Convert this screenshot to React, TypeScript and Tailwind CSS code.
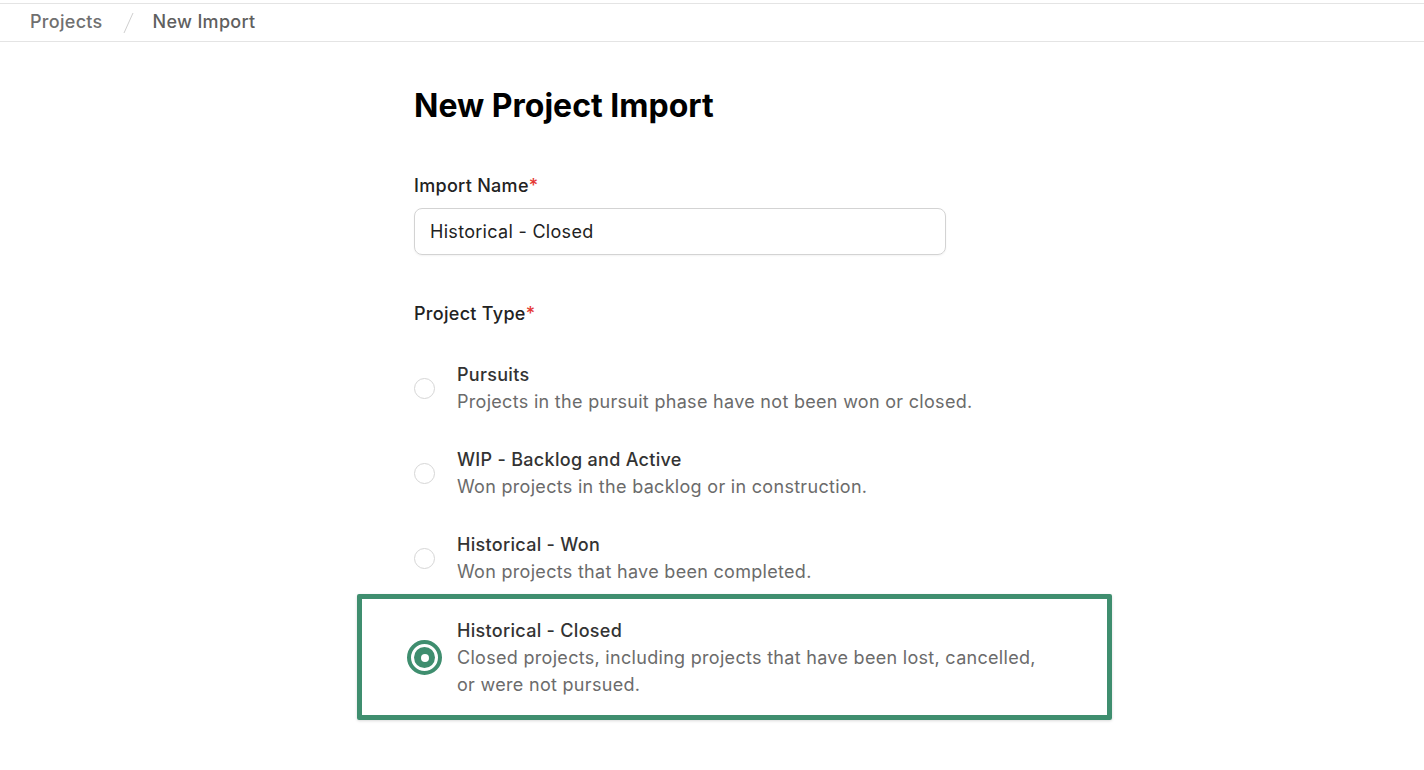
import React, { useState } from 'react'

type Option = { id: string; title: string; desc: string }

const options: Option[] = [
  { id: 'pursuits', title: 'Pursuits', desc: 'Projects in the pursuit phase have not been won or closed.' },
  { id: 'wip', title: 'WIP - Backlog and Active', desc: 'Won projects in the backlog or in construction.' },
  { id: 'won', title: 'Historical - Won', desc: 'Won projects that have been completed.' },
  {
    id: 'closed',
    title: 'Historical - Closed',
    desc: 'Closed projects, including projects that have been lost, cancelled, or were not pursued.',
  },
]

function Radio({ checked }: { checked: boolean }) {
  if (checked) {
    return (
      <span className="shrink-0 w-[21px] h-[21px] rounded-full bg-[#3f8e6f] flex items-center justify-center outline-[4px] outline-solid outline-offset-[3px] outline-[#3f8e6f]">
        <span className="w-[8px] h-[8px] rounded-full bg-white" />
      </span>
    )
  }
  return <span className="shrink-0 w-[21px] h-[21px] rounded-full border border-[#d6d6d6] bg-white" />
}

export default function App() {
  const [name, setName] = useState('Historical - Closed')
  const [selected, setSelected] = useState('closed')

  return (
    <div className="min-h-screen bg-white font-['Inter','Liberation_Sans',sans-serif] text-[18px] tracking-[0.3px]">
      {/* breadcrumb */}
      <header className="mt-[3px] h-[39px] border-y border-[#e4e4e4] flex items-center pl-[30px] pb-[2px] gap-[18px]">
        <span className="font-medium text-[#707070]">Projects</span>
        <svg width="14" height="24" viewBox="0 0 14 24" className="mt-[2px]">
          <line x1="12" y1="2" x2="3" y2="22" stroke="#cfcfcf" strokeWidth="1" />
        </svg>
        <span className="font-medium text-[#5f5f5f]">New Import</span>
      </header>

      <main className="w-[596px] mx-auto">
        <h1 className="mt-[44px] text-[32px] leading-[40px] font-bold text-black tracking-normal">
          New Project Import
        </h1>

        <label className="block mt-[46px] font-medium text-[#222] leading-[27px]">
          Import Name<span className="text-[#e53935]">*</span>
        </label>
        <input
          value={name}
          onChange={(e) => setName(e.target.value)}
          className="mt-[9px] w-[532px] h-[47px] rounded-[8px] border border-[#d3d3d3] px-[15px] text-[18px] tracking-[0.3px] text-[#222] outline-none shadow-[0_1px_2px_rgba(0,0,0,0.05)]"
        />

        <div className="mt-[45px] font-medium text-[#222] leading-[27px]">
          Project Type<span className="text-[#e53935]">*</span>
        </div>

        <div className="mt-[34px] flex flex-col gap-[31px]">
          {options.map((o) => {
            const isSel = o.id === selected
            const row = (
              <button
                key={o.id}
                onClick={() => setSelected(o.id)}
                className="flex items-center gap-[22px] text-left"
              >
                <Radio checked={isSel} />
                <span className="flex flex-col leading-[27px]">
                  <span className="font-medium text-[#333]">{o.title}</span>
                  <span className="text-[#6b6b6b] w-[590px]">{o.desc}</span>
                </span>
              </button>
            )
            if (o.id === 'closed') {
              return (
                <div
                  key={o.id}
                  className="-mt-[22px] -ml-[57px] w-[755px] border-[5px] border-[#3f8e6f] rounded-[2px] pt-[18px] pb-[17px] pl-[52px] shadow-[0_1px_3px_rgba(0,0,0,0.15)]"
                >
                  {row}
                </div>
              )
            }
            return row
          })}
        </div>
      </main>
    </div>
  )
}
